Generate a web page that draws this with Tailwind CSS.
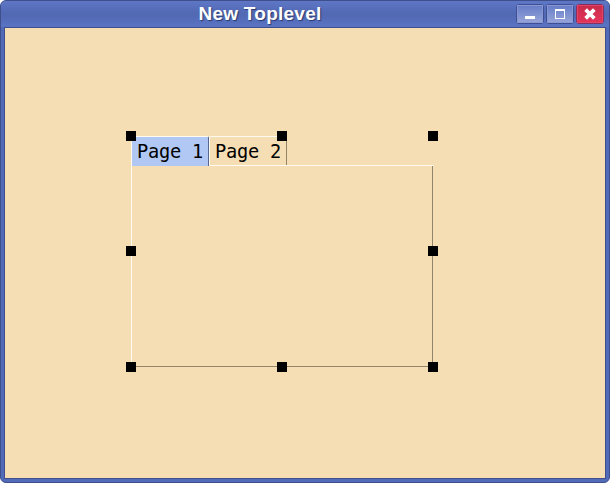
<!DOCTYPE html>
<html lang="en">
<head>
<meta charset="utf-8">
<title>New Toplevel</title>
<script src="https://cdn.jsdelivr.net/npm/@tailwindcss/browser@4"></script>
</head>
<body class="bg-white overflow-hidden">
<div class="w-[610px] h-[483px] flex flex-col rounded-t-[6px] rounded-b-[6px] overflow-hidden border border-[#3e4f8c] bg-[#526bb8]">
  <header class="h-[26px] shrink-0 flex items-center bg-linear-to-b from-[#5e77c6] via-[#5168b2] to-[#5a74c4] pr-[5px]">
    <h1 class="flex-1 text-center text-white font-bold text-[19px] tracking-[0.25px] leading-[26px] whitespace-nowrap pl-[3px] [font-family:'Liberation_Sans',Arial,sans-serif] [text-shadow:1px_1px_1px_#26386f]">New Toplevel</h1>
    <div class="flex gap-[2px]">
      <button class="block w-[28px] h-[20px] rounded-[3px] border border-[#3e5093] bg-linear-to-b from-[#647bc7] to-[#98a5d8]" aria-label="Minimize">
        <svg class="block" width="26" height="18" shape-rendering="crispEdges"><rect x=".5" y=".5" width="25" height="17" fill="none" stroke="#8998d2"/><rect x="8" y="11" width="10" height="3" fill="#fff"/></svg>
      </button>
      <button class="block w-[28px] h-[20px] rounded-[3px] border border-[#3e5093] bg-linear-to-b from-[#647bc7] to-[#98a5d8]" aria-label="Maximize">
        <svg class="block" width="26" height="18" shape-rendering="crispEdges"><rect x=".5" y=".5" width="25" height="17" fill="none" stroke="#8998d2"/><path d="M8 4h10v10H8zM9 6v7h8V6z" fill="#fff" fill-rule="evenodd"/></svg>
      </button>
      <button class="block w-[28px] h-[20px] rounded-[3px] border border-[#85305f] bg-linear-to-b from-[#c72d4b] to-[#e4345b]" aria-label="Close">
        <svg class="block" width="26" height="18"><rect x=".5" y=".5" width="25" height="17" fill="none" stroke="#df4566"/><path d="M10 6l6 6M16 6L10 12" stroke="#fff" stroke-width="3.8" stroke-linecap="square"/></svg>
      </button>
    </div>
  </header>
  <main class="relative mx-[3px] mb-[3px] flex-1 border border-[#3e4f8c] bg-[#f5deb3]">
    <section class="absolute left-[126px] top-[108px] w-[302px] h-[231px] flex flex-col text-black text-[18.67px] tracking-[-0.24px] [font-family:'DejaVu_Sans_Mono',monospace]">
      <div class="flex h-[30px] shrink-0">
        <div class="relative w-[78px] h-[30px] border-t border-l border-r border-t-[#fffbee] border-l-[#fffbee] border-r-[#56668e] bg-[#b0c8f3] rounded-tr-[2px] pl-[5px] leading-[29px] whitespace-pre">Page 1</div>
        <div class="w-[78px] h-[29px] border-t border-l border-r border-t-[#fffbee] border-l-[#fffbee] border-r-[#93856b] rounded-tl-[2px] pl-[5px] leading-[29px] whitespace-pre">Page 2</div>
      </div>
      <div class="relative -mt-px flex-1 border border-t-0 border-l-[#fffbee] border-r-[#93856b] border-b-[#93856b]">
        <div class="absolute -top-0 left-[77px] -right-[2px] h-px bg-[#fffbee]"></div>
      </div>
    </section>
    <i class="absolute left-[121px] top-[103px] size-[10px] bg-black"></i>
    <i class="absolute left-[272px] top-[103px] size-[10px] bg-black"></i>
    <i class="absolute left-[423px] top-[103px] size-[10px] bg-black"></i>
    <i class="absolute left-[121px] top-[218px] size-[10px] bg-black"></i>
    <i class="absolute left-[423px] top-[218px] size-[10px] bg-black"></i>
    <i class="absolute left-[121px] top-[334px] size-[10px] bg-black"></i>
    <i class="absolute left-[272px] top-[334px] size-[10px] bg-black"></i>
    <i class="absolute left-[423px] top-[334px] size-[10px] bg-black"></i>
  </main>
</div>
</body>
</html>
